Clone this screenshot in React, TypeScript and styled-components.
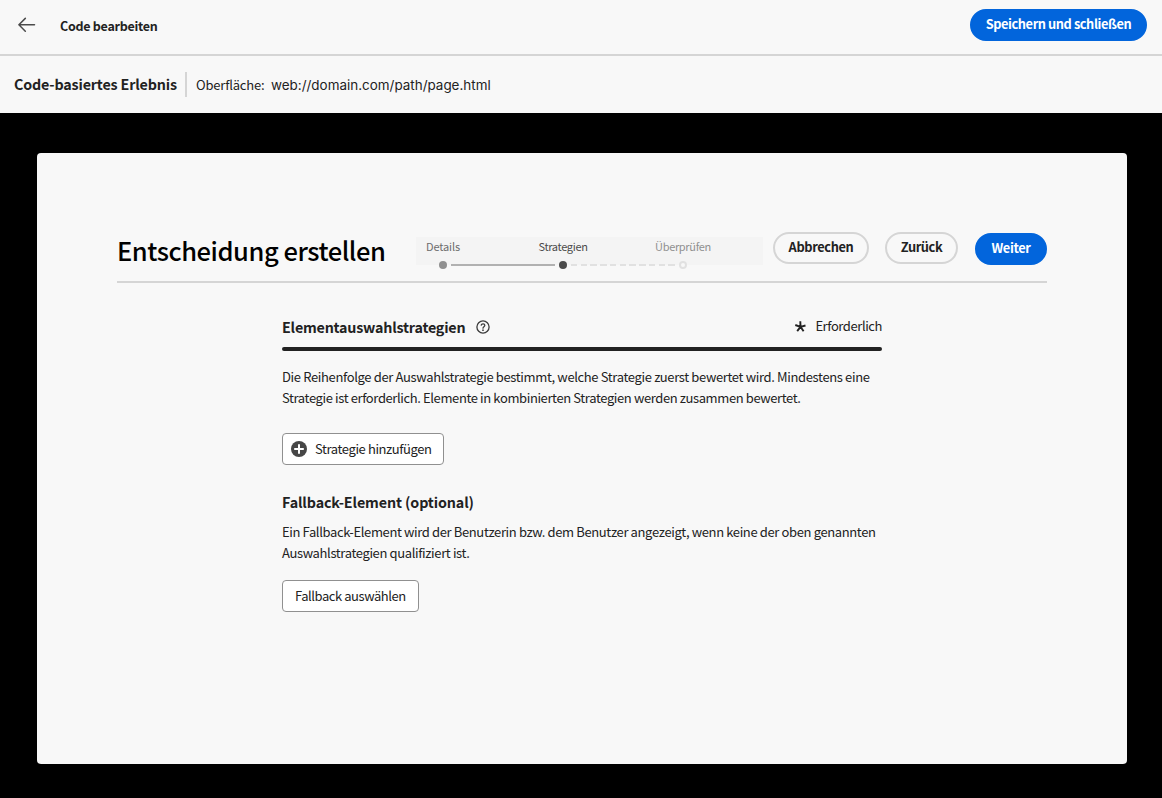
import React from 'react';
import styled, { createGlobalStyle } from 'styled-components';

const GlobalStyle = createGlobalStyle`
  *, *::before, *::after { box-sizing: border-box; }
  body { margin: 0; background: #000; }
  h1, h2, p { margin: 0; }
  button {
    display: inline-flex; align-items: center; justify-content: center;
    padding: 0; font-family: inherit; color: inherit; cursor: pointer; white-space: nowrap;
  }
`;

const Page = styled.div`
  display: flex;
  flex-direction: column;
  height: 798px;
  overflow: hidden;
  background: #000;
  color: #222;
  font-family: "Noto Sans CJK SC", "Noto Sans", sans-serif;
  font-size: 13px;
`;

const Text = styled.span<{ $track?: number }>`
  letter-spacing: ${p => p.$track ?? 0}px;
  white-space: nowrap;
`;

const TopBar = styled.header`
  display: flex;
  align-items: flex-start;
  height: 56px;
  flex: none;
  padding: 9px 15px 0 18px;
  background: #f8f8f8;
  border-bottom: 2px solid #d5d5d5;
`;

const BackButton = styled.button`
  width: 18px;
  height: 32px;
  border: 0;
  background: none;
`;

const TopTitle = styled.h1`
  flex: 1;
  margin-left: 24px;
  font-size: 12.5px;
  line-height: 34px;
  font-weight: 700;
`;

const PillButton = styled.button<{ $primary?: boolean; $width: number }>`
  width: ${p => p.$width}px;
  height: 32px;
  border-radius: 16px;
  border: 2px solid ${p => (p.$primary ? '#0265dc' : '#d5d5d5')};
  background: ${p => (p.$primary ? '#0265dc' : 'transparent')};
  color: ${p => (p.$primary ? '#fff' : '#222')};
  font-size: 12.8px;
  line-height: 26px;
  padding-bottom: 3px;
  font-weight: 700;
`;

const SubBar = styled.div`
  display: flex;
  align-items: center;
  height: 57px;
  flex: none;
  padding-left: 14px;
  background: #f8f8f8;
`;

const SubTitle = styled.h2`
  width: 171px;
  padding-bottom: 2px;
  font-size: 14.3px;
  line-height: 20px;
  font-weight: 700;
`;

const Divider = styled.div`
  width: 2px;
  height: 25px;
  background: #d5d5d5;
`;

const SurfaceLabel = styled.div`
  width: 75px;
  margin-left: 9px;
  padding-top: 1px;
  line-height: 20px;
`;

const SurfacePath = styled.div`
  font-family: Inter, sans-serif;
  font-size: 13.45px;
  line-height: 20px;
`;

const Panel = styled.main`
  margin: 40px 35px 34px 37px;
  flex: 1;
  padding: 79px 80px 0;
  border-radius: 4px;
  background: #f8f8f8;
`;

const PanelHeader = styled.div`
  display: flex;
  align-items: flex-start;
  height: 51px;
  border-bottom: 2px solid #d5d5d5;
`;

const PanelTitle = styled.h1`
  width: 299px;
  color: #000;
  font-size: 25.5px;
  line-height: 36px;
  font-weight: 500;
`;

const Stepper = styled.div`
  width: 347px;
  height: 28px;
  margin: 5px 10px 0 0;
  background: #f4f4f4;
`;

const StepLabels = styled.div`
  display: flex;
  gap: 66px;
  height: 24px;
`;

const StepLabel = styled.div<{ $color: string }>`
  display: flex;
  justify-content: center;
  width: 54px;
  color: ${p => p.$color};
  font-size: 11px;
  line-height: 19px;
`;

const StepTrack = styled.div`
  display: flex;
  align-items: center;
  gap: 4px;
  height: 8px;
  padding-left: 23px;
`;

const Dot = styled.span<{ $fill: string; $ring?: string }>`
  width: 8px;
  height: 8px;
  border-radius: 50%;
  background: ${p => p.$fill};
  border: ${p => (p.$ring ? `2px solid ${p.$ring}` : '0')};
`;

const Connector = styled.span<{ $dashed?: boolean }>`
  width: 104px;
  height: 2px;
  background: ${p =>
    p.$dashed ? 'repeating-linear-gradient(90deg, #e1e1e1 0 6.3px, transparent 6.3px 9.75px)' : '#b1b1b1'};
`;

const Actions = styled.div`
  display: flex;
  align-items: flex-start;

  > :nth-child(2) { margin: 0 17px 0 16px; }
  > :last-child { margin-top: 1px; }
`;

const Content = styled.div`
  width: 600px;
  margin-left: 165px;
`;

const SectionHeader = styled.div`
  display: flex;
  align-items: center;
  margin-top: 33px;
  height: 31px;
  padding-bottom: 9px;
`;

const SectionTitle = styled.h2`
  font-size: 14.3px;
  line-height: 22px;
  font-weight: 700;
`;

const HelpIcon = styled.svg`
  margin-left: 11px;
`;

const Required = styled.div`
  display: flex;
  align-items: center;
  gap: 9px;
  margin-left: auto;
  line-height: 20px;
  padding-bottom: 2px;
`;

const Rule = styled.div`
  height: 4px;
  border-radius: 2px;
  background: #222;
`;

const Paragraph = styled.p<{ $top: number }>`
  display: flex;
  flex-direction: column;
  margin-top: ${p => p.$top}px;
  line-height: 21px;
`;

const BoxButton = styled.button<{ $width: number; $top: number }>`
  display: flex;
  justify-content: flex-start;
  gap: 8px;
  width: ${p => p.$width}px;
  height: 32px;
  margin-top: ${p => p.$top}px;
  border: 1px solid #909090;
  border-radius: 4px;
  background: #fff;
  font-size: 13px;
  line-height: 30px;
  padding-left: 12px;

  > svg { margin-left: -4px; }
`;

const FallbackTitle = styled(SectionTitle)`
  margin-top: 26px;
`;

export default function App() {
  return (
    <Page>
      <GlobalStyle />
      <TopBar>
        <BackButton aria-label="Zurück">
          <svg width="18" height="16" viewBox="0 0 18 16" fill="none" stroke="#4b4b4b" strokeWidth="1.5" strokeLinecap="round" strokeLinejoin="round">
            <path d="M16.5 7.8H1.2M7.3 1.4L.9 7.8l6.4 6.4" />
          </svg>
        </BackButton>
        <TopTitle><Text $track={-0.27}>Code bearbeiten</Text></TopTitle>
        <PillButton $primary $width={177}><Text $track={-0.42}>Speichern und schließen</Text></PillButton>
      </TopBar>

      <SubBar>
        <SubTitle><Text $track={-0.17}>Code-basiertes Erlebnis</Text></SubTitle>
        <Divider />
        <SurfaceLabel><Text $track={-0.2}>Oberfläche:</Text></SurfaceLabel>
        <SurfacePath>web://domain.com/path/page.html</SurfacePath>
      </SubBar>

      <Panel>
        <PanelHeader>
          <PanelTitle><Text $track={-0.45}>Entscheidung erstellen</Text></PanelTitle>
          <Stepper>
            <StepLabels>
              <StepLabel $color="#6d6d6d"><Text $track={-0.15}>Details</Text></StepLabel>
              <StepLabel $color="#4b4b4b"><Text $track={-0.33}>Strategien</Text></StepLabel>
              <StepLabel $color="#909090"><Text $track={-0.33}>Überprüfen</Text></StepLabel>
            </StepLabels>
            <StepTrack>
              <Dot $fill="#909090" />
              <Connector />
              <Dot $fill="#4b4b4b" />
              <Connector $dashed />
              <Dot $fill="#f8f8f8" $ring="#e1e1e1" />
            </StepTrack>
          </Stepper>
          <Actions>
            <PillButton $width={96}><Text $track={-0.37}>Abbrechen</Text></PillButton>
            <PillButton $width={73}><Text $track={-0.4}>Zurück</Text></PillButton>
            <PillButton $primary $width={72}><Text $track={-0.35}>Weiter</Text></PillButton>
          </Actions>
        </PanelHeader>

        <Content>
          <SectionHeader>
            <SectionTitle><Text $track={-0.21}>Elementauswahlstrategien</Text></SectionTitle>
            <HelpIcon width="14" height="14" viewBox="0 0 14 14" fill="none" stroke="#3b3b3b" strokeLinecap="round">
              <circle cx="7" cy="7" r="6.1" strokeWidth="1.3" />
              <path d="M5.2 5.1C5.5 3.4 8.8 3.3 8.8 5.3 8.8 6.7 7 6.7 7 8.2" strokeWidth="1.3" />
              <circle cx="7" cy="10.2" r=".85" fill="#3b3b3b" stroke="none" />
            </HelpIcon>
            <Required>
              <svg width="12" height="12" viewBox="0 0 12 12" fill="none" stroke="#222" strokeWidth="1.9">
                <path d="M6.5 6.8L6.3 1.3M6.5 6.8l5-1.3M6.5 6.8L9.6 11.3M6.5 6.8L3.2 11.1M6.5 6.8L1.3 5" />
              </svg>
              <Text $track={-0.42}>Erforderlich</Text>
            </Required>
          </SectionHeader>
          <Rule />
          <Paragraph $top={15}>
            <Text $track={-0.355}>Die Reihenfolge der Auswahlstrategie bestimmt, welche Strategie zuerst bewertet wird. Mindestens eine</Text>
            <Text $track={-0.385}>Strategie ist erforderlich. Elemente in kombinierten Strategien werden zusammen bewertet.</Text>
          </Paragraph>
          <BoxButton $width={162} $top={25}>
            <svg width="16" height="16" viewBox="0 0 16 16">
              <circle cx="8" cy="8" r="8" fill="#464646" />
              <path d="M8 3.2v9.6M3.2 8h9.6" stroke="#fff" strokeWidth="2" />
            </svg>
            <Text $track={-0.4}>Strategie hinzufügen</Text>
          </BoxButton>

          <FallbackTitle><Text $track={-0.12}>Fallback-Element (optional)</Text></FallbackTitle>
          <Paragraph $top={8}>
            <Text $track={-0.37}>Ein Fallback-Element wird der Benutzerin bzw. dem Benutzer angezeigt, wenn keine der oben genannten</Text>
            <Text $track={-0.37}>Auswahlstrategien qualifiziert ist.</Text>
          </Paragraph>
          <BoxButton $width={137} $top={17}><Text $track={-0.45}>Fallback auswählen</Text></BoxButton>
        </Content>
      </Panel>
    </Page>
  );
}
